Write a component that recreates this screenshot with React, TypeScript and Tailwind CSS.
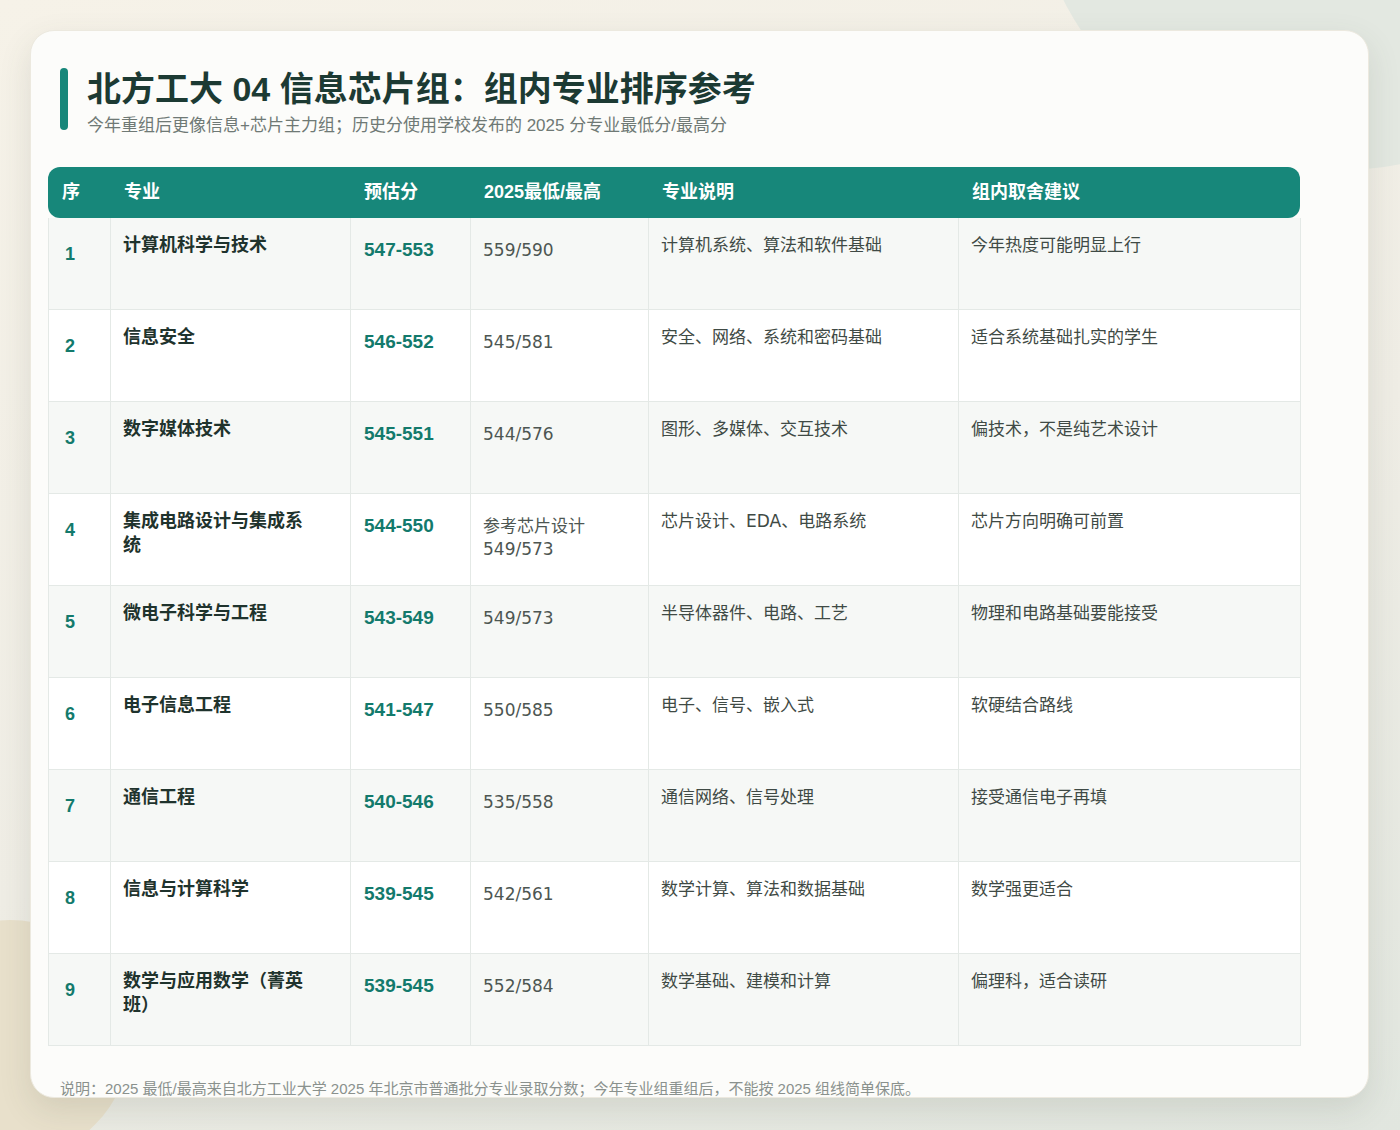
import React from "react";

type Row = {
  n: number;
  major: string;
  score: string;
  hist: string;
  desc: string;
  advice: string;
};

const rows: Row[] = [
  { n: 1, major: "计算机科学与技术", score: "547-553", hist: "559/590", desc: "计算机系统、算法和软件基础", advice: "今年热度可能明显上行" },
  { n: 2, major: "信息安全", score: "546-552", hist: "545/581", desc: "安全、网络、系统和密码基础", advice: "适合系统基础扎实的学生" },
  { n: 3, major: "数字媒体技术", score: "545-551", hist: "544/576", desc: "图形、多媒体、交互技术", advice: "偏技术，不是纯艺术设计" },
  { n: 4, major: "集成电路设计与集成系统", score: "544-550", hist: "参考芯片设计 549/573", desc: "芯片设计、EDA、电路系统", advice: "芯片方向明确可前置" },
  { n: 5, major: "微电子科学与工程", score: "543-549", hist: "549/573", desc: "半导体器件、电路、工艺", advice: "物理和电路基础要能接受" },
  { n: 6, major: "电子信息工程", score: "541-547", hist: "550/585", desc: "电子、信号、嵌入式", advice: "软硬结合路线" },
  { n: 7, major: "通信工程", score: "540-546", hist: "535/558", desc: "通信网络、信号处理", advice: "接受通信电子再填" },
  { n: 8, major: "信息与计算科学", score: "539-545", hist: "542/561", desc: "数学计算、算法和数据基础", advice: "数学强更适合" },
  { n: 9, major: "数学与应用数学（菁英班）", score: "539-545", hist: "552/584", desc: "数学基础、建模和计算", advice: "偏理科，适合读研" },
];

const headers = ["序", "专业", "预估分", "2025最低/最高", "专业说明", "组内取舍建议"];

export default function App() {
  return (
    <div className="relative h-[1130px] w-full overflow-hidden bg-[linear-gradient(160deg,#f6f2e8_0%,#efede5_55%,#e1e6df_100%)] font-['Liberation_Sans','Noto_Sans_CJK_SC',sans-serif]">
      {/* decorative background shapes */}
      <div className="absolute left-[1030px] top-[-450px] h-[620px] w-[620px] rounded-full bg-[#e3e8e1]" />
      <div className="absolute left-[-110px] top-[920px] h-[240px] w-[240px] rounded-full bg-[#e8e0cb]" />

      <div className="relative p-[30px]">
        <div className="flex h-[1068px] w-[1339px] flex-col overflow-hidden rounded-[24px] border border-[#ece9df] bg-[#fcfcfa] px-[17px] pt-[37px] shadow-[0_12px_32px_rgba(70,80,60,0.13)]">
          {/* Title */}
          <div className="ml-[12px] flex gap-[19px]">
            <div className="h-[62px] w-[8px] shrink-0 rounded-full bg-[#17877a]" />
            <div className="flex flex-col">
              <h1 className="text-[34px] font-bold leading-[42px] text-[#1c3a33]">
                北方工大 04 信息芯片组：组内专业排序参考
              </h1>
              <p className="mt-[5px] text-[17px] leading-[22px] text-[#6f7975]">
                今年重组后更像信息+芯片主力组；历史分使用学校发布的 2025 分专业最低分/最高分
              </p>
            </div>
          </div>

          {/* Table */}
          <div className="mt-[30px] w-[1252px]">
            <div className="grid h-[51px] grid-cols-[62px_240px_120px_178px_310px_342px] items-center rounded-[12px] bg-[#17877a] text-[18px] font-bold text-white">
              {headers.map((h) => (
                <div key={h} className="pl-[14px]">
                  {h}
                </div>
              ))}
            </div>
            <div className="border-l border-[#e4e9e6]">
              {rows.map((r) => (
                <div
                  key={r.n}
                  className={
                    "grid h-[92px] grid-cols-[62px_240px_120px_178px_310px_342px] " +
                    (r.n % 2 === 1 ? "bg-[#f6f8f6]" : "bg-white")
                  }
                >
                  <div className="border-b border-r border-[#e4e9e6] pl-[16px] pt-[24px] text-[18px] font-bold leading-[24px] text-[#137a6c]">
                    {r.n}
                  </div>
                  <div className="border-b border-r border-[#e4e9e6] pl-[12px] pr-[44px] pt-[15px] text-[18px] font-bold leading-[24px] text-[#1f332d]">
                    {r.major}
                  </div>
                  <div className="border-b border-r border-[#e4e9e6] pl-[13px] pt-[20px] text-[19px] font-bold leading-[24px] text-[#137a6c]">
                    {r.score}
                  </div>
                  <div className="border-b border-r border-[#e4e9e6] pl-[12px] pr-[12px] pt-[21px] font-['DejaVu_Sans','Noto_Sans_CJK_SC',sans-serif] text-[17px] leading-[23px] text-[#4d5652]">
                    {r.hist}
                  </div>
                  <div className="border-b border-r border-[#e4e9e6] pl-[12px] pr-[12px] pt-[15px] font-['DejaVu_Sans','Noto_Sans_CJK_SC',sans-serif] text-[17px] leading-[24px] text-[#3f4a45]">
                    {r.desc}
                  </div>
                  <div className="border-b border-r border-[#e4e9e6] pl-[12px] pr-[12px] pt-[15px] font-['DejaVu_Sans','Noto_Sans_CJK_SC',sans-serif] text-[17px] leading-[24px] text-[#3f4a45]">
                    {r.advice}
                  </div>
                </div>
              ))}
            </div>
          </div>

          {/* Footer */}
          <p className="ml-[12px] mt-[32px] shrink-0 text-[15px] leading-[22px] text-[#8a918d]">
            说明：2025 最低/最高来自北方工业大学 2025 年北京市普通批分专业录取分数；今年专业组重组后，不能按 2025 组线简单保底。
          </p>
        </div>
      </div>
    </div>
  );
}
